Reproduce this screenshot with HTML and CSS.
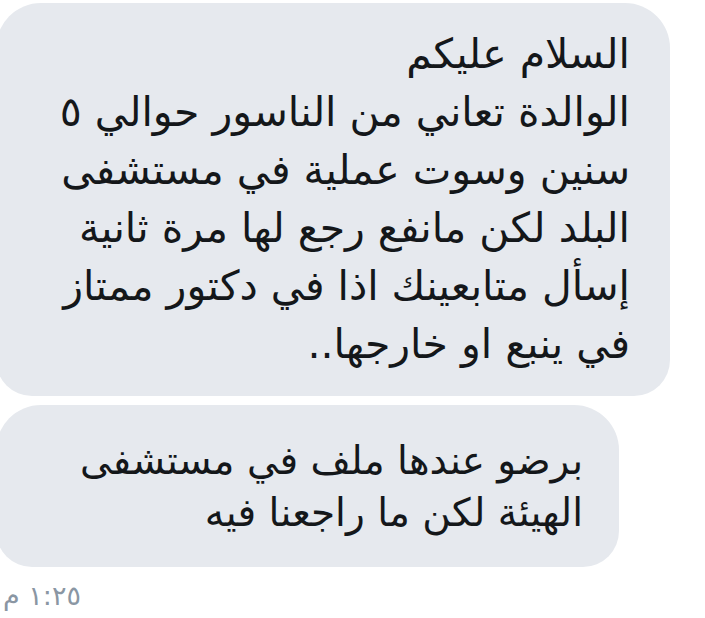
FILE: index.html
```html
<!DOCTYPE html>
<html lang="ar">
<head>
    <meta charset="UTF-8">
    <meta name="viewport" content="width=device-width, initial-scale=1.0">
    <title>رسائل</title>
    <link rel="stylesheet" href="styles.css">
</head>
<body>

    <div class="thread">
        <div class="bubble bubble-long">
            <p>السلام عليكم<br>
            الوالدة تعاني من الناسور حوالي ٥<br>
            سنين وسوت عملية في مستشفى<br>
            البلد لكن مانفع رجع لها مرة ثانية<br>
            إسأل متابعينك اذا في دكتور ممتاز<br>
            في ينبع او خارجها..</p>
        </div>
        <div class="bubble bubble-short">
            <p>برضو عندها ملف في مستشفى<br>
            الهيئة لكن ما راجعنا فيه</p>
        </div>
        <div class="time">١:٢٥ م</div>
    </div>

</body>
</html>
```

FILE: styles.css
```css
/* المحادثة */
body {
    margin: 0;
    background-color: #fff;
    font-family: "DejaVu Sans", "Noto Sans", sans-serif;
    color: #14171a;
}

.thread {
    padding-top: 3px;
}

.bubble {
    direction: rtl;
    text-align: right;
    box-sizing: border-box;
    margin-left: -4px;
    background-color: #e6e9ee;
    border-radius: 45px 45px 36px 36px;
    padding-right: 40px;
}

.bubble p {
    margin: 0;
    font-size: 41px;
    line-height: 58px;
}

.bubble-long {
    width: 674px;
    height: 393px;
    padding-top: 22px;
}

.bubble-short {
    width: 623px;
    height: 162px;
    margin-top: 9px;
    padding-top: 30px;
    padding-right: 36px;
}

.bubble-short p {
    font-size: 39px;
    line-height: 52px;
}

.time {
    direction: rtl;
    text-align: left;
    padding-left: 3px;
    margin-top: 13px;
    font-size: 27px;
    color: #8a96a3;
}
```
